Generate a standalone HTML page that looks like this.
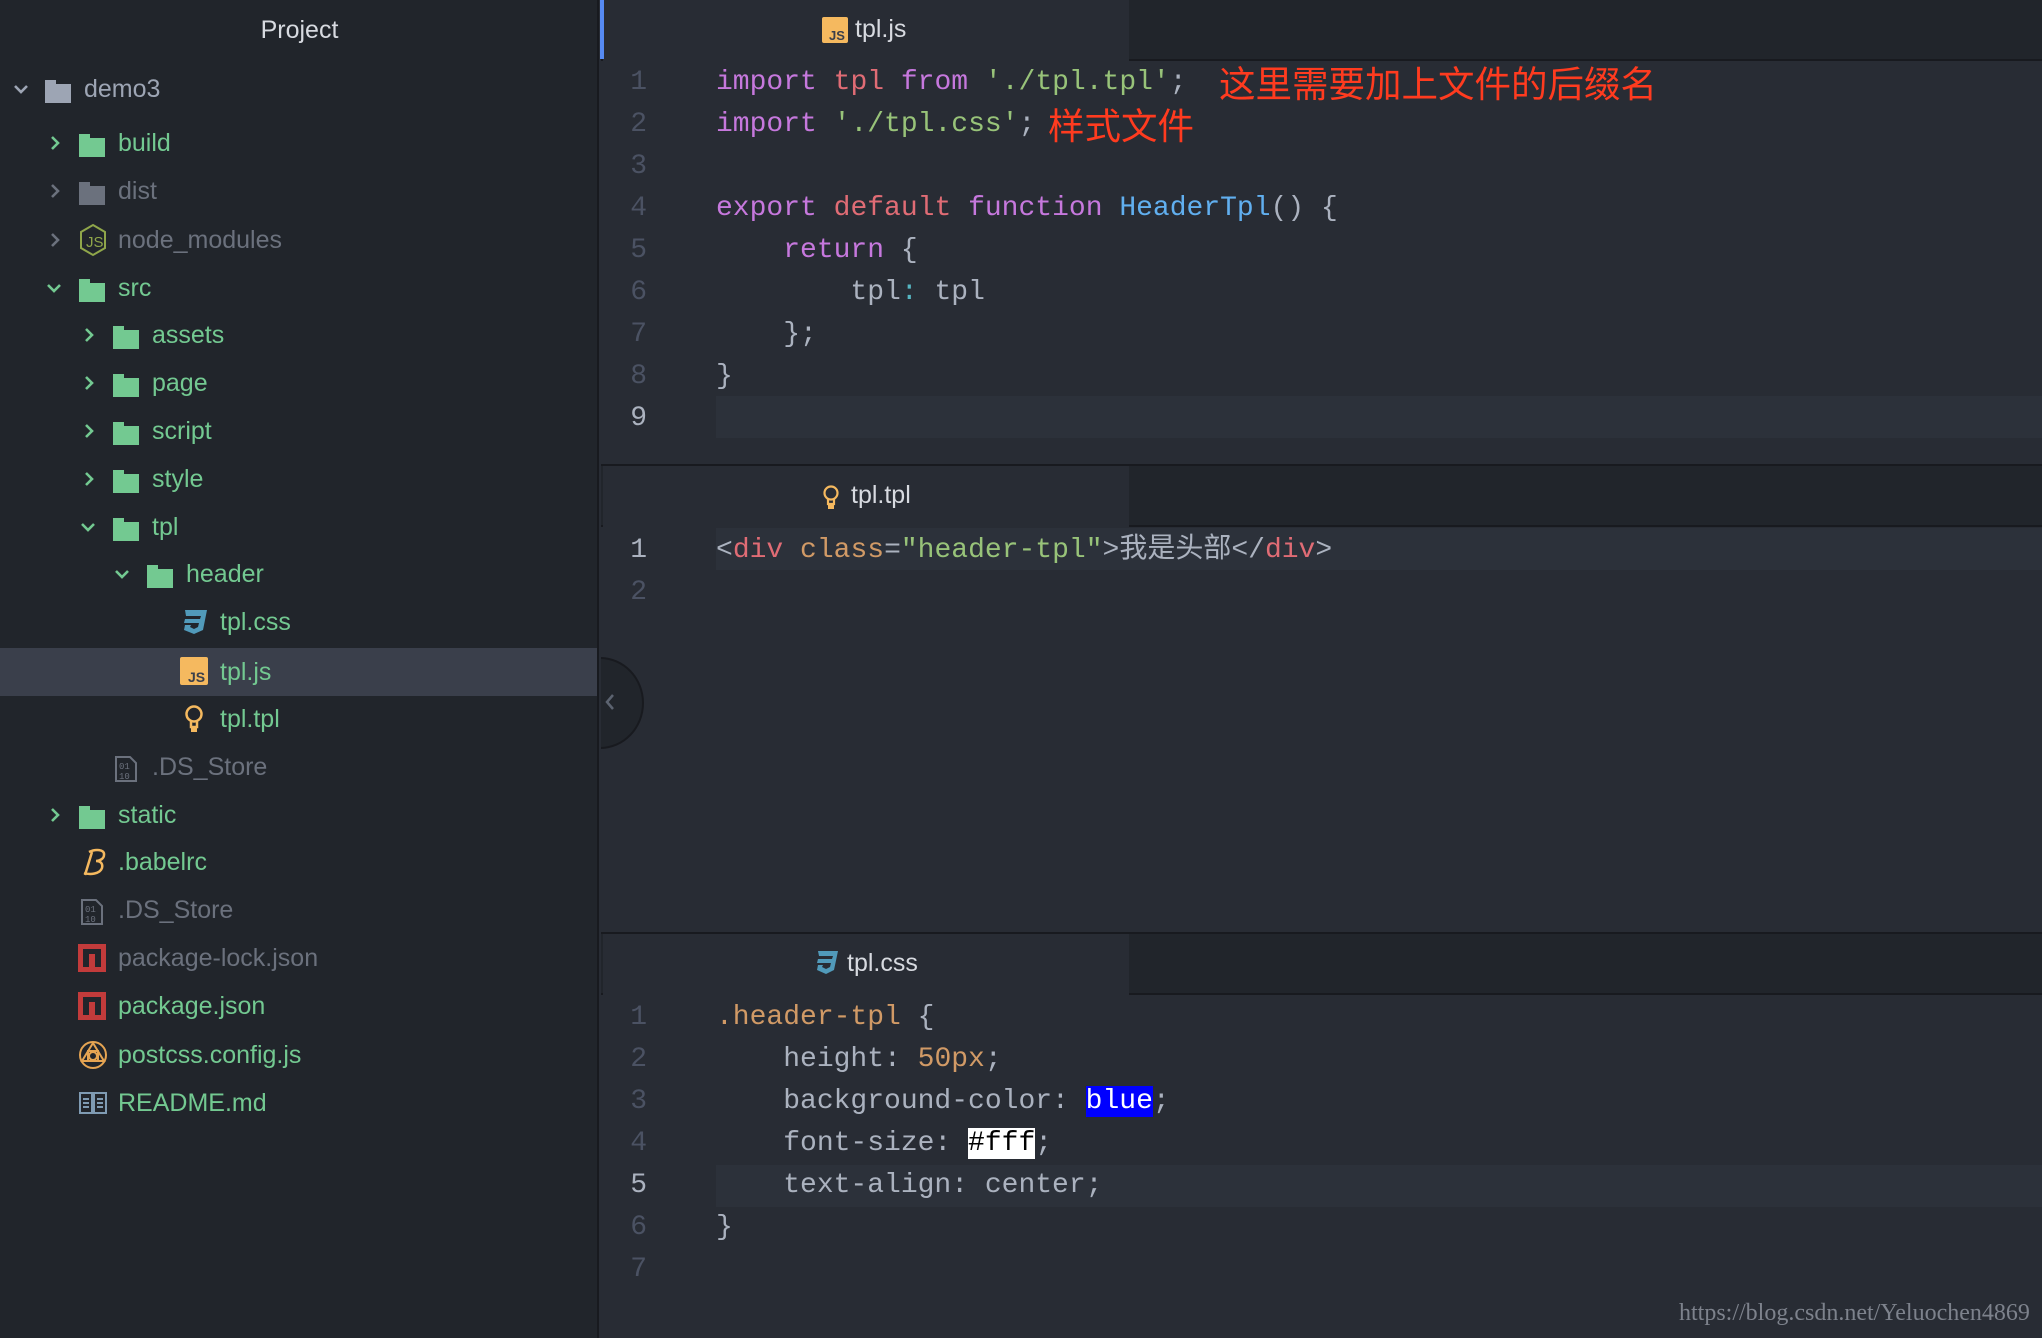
<!DOCTYPE html>
<html><head><meta charset="utf-8"><style>
*{margin:0;padding:0;box-sizing:border-box}
body{width:2042px;height:1338px;background:#282c34;position:relative;overflow:hidden;font-family:"Liberation Sans","Noto Sans CJK SC",sans-serif}
#side{position:absolute;left:0;top:0;width:599px;height:1338px;background:#21252b;border-right:2px solid #181a1f}
.title{position:absolute;top:16px;left:0;width:599px;text-align:center;color:#d7dae0;font-size:25px}
.row{position:absolute;left:0;width:597px;height:48px;font-size:25px;line-height:48px;white-space:nowrap}
.row .t{position:absolute;top:0}
.row svg{position:absolute}
.g{color:#73c991}.gr{color:#6b717d}.d{color:#9da5b4}
.sel{background:#3a3f4b}
.chev{position:absolute;top:17px}
.code{position:absolute;font-family:"Liberation Mono","Noto Sans CJK SC",monospace;font-size:28px;line-height:42px;height:42px;white-space:pre;color:#abb2bf}
.ln{position:absolute;width:60px;left:587px;text-align:right;font-family:"Liberation Mono",monospace;font-size:28px;line-height:42px;color:#4b5263}
.tabbar{position:absolute;left:601px;width:1441px;height:61px;background:#21252b;border-bottom:2px solid #181a1f}
.tab{position:absolute;left:2px;top:0;width:526px;height:61px;background:#282c34;color:#d7dae0;font-size:25px;line-height:58px}
.hl{position:absolute;left:716px;right:0;height:42px;background:#2c313a}
.k{color:#c678dd}.r{color:#e06c75}.s{color:#98c379}.f{color:#61afef}.o{color:#d19a66}.c{color:#56b6c2}
.cn{position:absolute;color:#ff3b1f;font-family:"Noto Sans CJK SC",sans-serif;font-size:36.5px;line-height:42px;height:42px}
</style></head><body>
<div id="side">
<div class="title">Project</div>

<div class="row" style="top:65px">
<svg class="chev" style="left:13px;top:19px" width="16" height="12" viewBox="0 0 16 12"><path d="M2 2l6 6 6-6" stroke="#9da5b4" stroke-width="2.6" fill="none"/></svg>
<svg style="left:44px;top:14px" width="28" height="25"><path d="M1 1h11v4h15v19H1z" fill="#9da5b4"/></svg>
<span class="t d" style="left:84px">demo3</span></div>

<div class="row" style="top:119px">
<svg class="chev" style="left:50px;top:16px" width="12" height="16"><path d="M2 2l6 6-6 6" stroke="#73c991" stroke-width="2.6" fill="none"/></svg>
<svg style="left:78px;top:14px" width="28" height="25"><path d="M1 1h11v4h15v19H1z" fill="#73c991"/></svg>
<span class="t g" style="left:118px">build</span></div>

<div class="row" style="top:167px">
<svg class="chev" style="left:50px;top:16px" width="12" height="16"><path d="M2 2l6 6-6 6" stroke="#6b717d" stroke-width="2.6" fill="none"/></svg>
<svg style="left:78px;top:14px" width="28" height="25"><path d="M1 1h11v4h15v19H1z" fill="#6b717d"/></svg>
<span class="t gr" style="left:118px">dist</span></div>

<div class="row" style="top:216px">
<svg class="chev" style="left:50px;top:16px" width="12" height="16"><path d="M2 2l6 6-6 6" stroke="#6b717d" stroke-width="2.6" fill="none"/></svg>
<svg style="left:78px;top:7px" width="30" height="34"><path d="M15 2l12 7v16l-12 7-12-7V9z" stroke="#8fa64a" stroke-width="2" fill="none"/><text x="8" y="24" font-size="15" fill="#8fa64a" font-family="Liberation Sans">JS</text></svg>
<span class="t gr" style="left:118px">node_modules</span></div>

<div class="row" style="top:264px">
<svg class="chev" style="left:46px;top:19px" width="16" height="12"><path d="M2 2l6 6 6-6" stroke="#73c991" stroke-width="2.6" fill="none"/></svg>
<svg style="left:78px;top:14px" width="28" height="25"><path d="M1 1h11v4h15v19H1z" fill="#73c991"/></svg>
<span class="t g" style="left:118px">src</span></div>

<div class="row" style="top:311px">
<svg class="chev" style="left:84px;top:16px" width="12" height="16"><path d="M2 2l6 6-6 6" stroke="#73c991" stroke-width="2.6" fill="none"/></svg>
<svg style="left:112px;top:14px" width="28" height="25"><path d="M1 1h11v4h15v19H1z" fill="#73c991"/></svg>
<span class="t g" style="left:152px">assets</span></div>

<div class="row" style="top:359px">
<svg class="chev" style="left:84px;top:16px" width="12" height="16"><path d="M2 2l6 6-6 6" stroke="#73c991" stroke-width="2.6" fill="none"/></svg>
<svg style="left:112px;top:14px" width="28" height="25"><path d="M1 1h11v4h15v19H1z" fill="#73c991"/></svg>
<span class="t g" style="left:152px">page</span></div>

<div class="row" style="top:407px">
<svg class="chev" style="left:84px;top:16px" width="12" height="16"><path d="M2 2l6 6-6 6" stroke="#73c991" stroke-width="2.6" fill="none"/></svg>
<svg style="left:112px;top:14px" width="28" height="25"><path d="M1 1h11v4h15v19H1z" fill="#73c991"/></svg>
<span class="t g" style="left:152px">script</span></div>

<div class="row" style="top:455px">
<svg class="chev" style="left:84px;top:16px" width="12" height="16"><path d="M2 2l6 6-6 6" stroke="#73c991" stroke-width="2.6" fill="none"/></svg>
<svg style="left:112px;top:14px" width="28" height="25"><path d="M1 1h11v4h15v19H1z" fill="#73c991"/></svg>
<span class="t g" style="left:152px">style</span></div>

<div class="row" style="top:503px">
<svg class="chev" style="left:80px;top:19px" width="16" height="12"><path d="M2 2l6 6 6-6" stroke="#73c991" stroke-width="2.6" fill="none"/></svg>
<svg style="left:112px;top:14px" width="28" height="25"><path d="M1 1h11v4h15v19H1z" fill="#73c991"/></svg>
<span class="t g" style="left:152px">tpl</span></div>

<div class="row" style="top:550px">
<svg class="chev" style="left:114px;top:19px" width="16" height="12"><path d="M2 2l6 6 6-6" stroke="#73c991" stroke-width="2.6" fill="none"/></svg>
<svg style="left:146px;top:14px" width="28" height="25"><path d="M1 1h11v4h15v19H1z" fill="#73c991"/></svg>
<span class="t g" style="left:186px">header</span></div>

<div class="row" style="top:598px">
<svg style="left:180px;top:11px" width="28" height="26"><path d="M5 1h22l-4 20-9 4-10-4 1-5h6l-1 2 4 2 4-2 1-4H4l1-4h15l1-3H6z" fill="#519aba"/></svg>
<span class="t g" style="left:220px">tpl.css</span></div>

<div class="row sel" style="top:648px">
<svg style="left:180px;top:9px" width="28" height="28"><rect width="28" height="28" rx="2" fill="#f5b95f"/><text x="8" y="25" font-size="14" font-weight="bold" fill="#3a3f4b" font-family="Liberation Sans">JS</text></svg>
<span class="t g" style="left:220px">tpl.js</span></div>

<div class="row" style="top:695px">
<svg style="left:184px;top:10px" width="20" height="30"><circle cx="10" cy="9" r="7.5" stroke="#f5b95f" stroke-width="2.5" fill="none"/><path d="M7 16v6h6v-6" stroke="#f5b95f" stroke-width="2.5" fill="none"/><rect x="7" y="22" width="6" height="5" fill="#f5b95f"/></svg>
<span class="t g" style="left:220px">tpl.tpl</span></div>

<div class="row" style="top:743px">
<svg style="left:114px;top:12px" width="24" height="28"><path d="M2 2h14l6 6v18H2z" stroke="#6b717d" stroke-width="2" fill="none"/><text x="5" y="14" font-size="9" fill="#6b717d" font-family="Liberation Mono">01</text><text x="5" y="24" font-size="9" fill="#6b717d" font-family="Liberation Mono">10</text></svg>
<span class="t gr" style="left:152px">.DS_Store</span></div>

<div class="row" style="top:791px">
<svg class="chev" style="left:50px;top:16px" width="12" height="16"><path d="M2 2l6 6-6 6" stroke="#73c991" stroke-width="2.6" fill="none"/></svg>
<svg style="left:78px;top:14px" width="28" height="25"><path d="M1 1h11v4h15v19H1z" fill="#73c991"/></svg>
<span class="t g" style="left:118px">static</span></div>

<div class="row" style="top:838px">
<svg style="left:80px;top:10px" width="28" height="30"><path d="M9 4c6-3 16-3 15 3 0 4-5 6-8 6 5 0 7 3 6 7-2 6-12 7-18 5M12 4L5 27" stroke="#f5b95f" stroke-width="2.5" fill="none"/></svg>
<span class="t g" style="left:118px">.babelrc</span></div>

<div class="row" style="top:886px">
<svg style="left:80px;top:12px" width="24" height="28"><path d="M2 2h14l6 6v18H2z" stroke="#6b717d" stroke-width="2" fill="none"/><text x="5" y="14" font-size="9" fill="#6b717d" font-family="Liberation Mono">01</text><text x="5" y="24" font-size="9" fill="#6b717d" font-family="Liberation Mono">10</text></svg>
<span class="t gr" style="left:118px">.DS_Store</span></div>

<div class="row" style="top:934px">
<svg style="left:78px;top:10px" width="28" height="28"><rect width="28" height="28" fill="#c23b3b"/><rect x="5" y="5" width="18" height="18" fill="#21252b"/><rect x="11" y="10" width="6" height="13" fill="#c23b3b"/></svg>
<span class="t gr" style="left:118px">package-lock.json</span></div>

<div class="row" style="top:982px">
<svg style="left:78px;top:10px" width="28" height="28"><rect width="28" height="28" fill="#c23b3b"/><rect x="5" y="5" width="18" height="18" fill="#21252b"/><rect x="11" y="10" width="6" height="13" fill="#c23b3b"/></svg>
<span class="t g" style="left:118px">package.json</span></div>

<div class="row" style="top:1031px">
<svg style="left:78px;top:9px" width="30" height="30"><circle cx="15" cy="15" r="13" stroke="#e5a452" stroke-width="2" fill="none"/><path d="M15 3L4 21h22z" stroke="#e5a452" stroke-width="2" fill="none"/><rect x="10" y="11" width="10" height="10" stroke="#e5a452" stroke-width="2" fill="none"/><circle cx="15" cy="16" r="4" stroke="#e5a452" stroke-width="2" fill="none"/></svg>
<span class="t g" style="left:118px">postcss.config.js</span></div>

<div class="row" style="top:1079px">
<svg style="left:78px;top:11px" width="30" height="26"><path d="M2 3h12v20H2zM16 3h12v20H16z" stroke="#7f9bb3" stroke-width="2" fill="none"/><path d="M5 9h6M5 13h6M5 17h6M19 9h6M19 13h6M19 17h6" stroke="#7f9bb3" stroke-width="2"/></svg>
<span class="t g" style="left:118px">README.md</span></div>
</div>

<div style="position:absolute;left:556px;top:657px;width:88px;height:92px;border-radius:50%;background:#21252b;border:2px solid #181a1f;clip-path:inset(0 0 0 45px)"></div>
<svg style="position:absolute;left:604px;top:692px" width="12" height="20"><path d="M9 3l-6 7 6 7" stroke="#5c6370" stroke-width="2.5" fill="none"/></svg>

<!-- Pane 1 -->
<div class="tabbar" style="top:0"><div class="tab">
<svg style="position:absolute;left:219px;top:17px" width="26" height="26"><rect width="26" height="26" rx="2" fill="#f5b95f"/><text x="7" y="23" font-size="13" font-weight="bold" fill="#3a3f4b" font-family="Liberation Sans">JS</text></svg>
<span style="position:absolute;left:252px">tpl.js</span></div></div>
<div style="position:absolute;left:600px;top:0;width:4px;height:59px;background:#568af2"></div>
<div class="hl" style="top:396px"></div>
<div class="ln" style="top:62px">1</div><div class="ln" style="top:104px">2</div><div class="ln" style="top:146px">3</div><div class="ln" style="top:188px">4</div><div class="ln" style="top:230px">5</div><div class="ln" style="top:272px">6</div><div class="ln" style="top:314px">7</div><div class="ln" style="top:356px">8</div><div class="ln" style="top:398px;color:#abb2bf">9</div>
<div class="code" style="left:716px;top:62px"><span class="k">import</span> <span class="r">tpl</span> <span class="k">from</span> <span class="s">'./tpl.tpl'</span>;</div>
<div class="cn" style="left:1219px;top:61px">这里需要加上文件的后缀名</div>
<div class="code" style="left:716px;top:104px"><span class="k">import</span> <span class="s">'./tpl.css'</span>;</div>
<div class="cn" style="left:1048px;top:103px">样式文件</div>
<div class="code" style="left:716px;top:188px"><span class="k">export</span> <span class="r">default</span> <span class="k">function</span> <span class="f">HeaderTpl</span>() {</div>
<div class="code" style="left:716px;top:230px">    <span class="k">return</span> {</div>
<div class="code" style="left:716px;top:272px">        tpl<span class="c">:</span> tpl</div>
<div class="code" style="left:716px;top:314px">    };</div>
<div class="code" style="left:716px;top:356px">}</div>
<div style="position:absolute;left:601px;right:0;top:464px;height:2px;background:#181a1f"></div>

<!-- Pane 2 -->
<div class="tabbar" style="top:466px"><div class="tab">
<svg style="position:absolute;left:219px;top:19px" width="18" height="26"><circle cx="9" cy="8" r="6.5" stroke="#f5b95f" stroke-width="2.2" fill="none"/><path d="M6 14v5h6v-5" stroke="#f5b95f" stroke-width="2.2" fill="none"/><rect x="6" y="19" width="6" height="5" fill="#f5b95f"/></svg>
<span style="position:absolute;left:248px">tpl.tpl</span></div></div>
<div class="hl" style="top:528px"></div>
<div class="ln" style="top:530px;color:#abb2bf">1</div><div class="ln" style="top:572px">2</div>
<div class="code" style="left:716px;top:530px">&lt;<span class="r">div</span> <span class="o">class</span>=<span class="s">"header-tpl"</span>&gt;我是头部&lt;/<span class="r">div</span>&gt;</div>
<div style="position:absolute;left:601px;right:0;top:932px;height:2px;background:#181a1f"></div>

<!-- Pane 3 -->
<div class="tabbar" style="top:934px"><div class="tab">
<svg style="position:absolute;left:210px;top:16px" width="26" height="26"><path d="M5 1h20l-4 19-8 4-9-4 1-5h5l-1 2 4 2 4-2 1-4H4l1-4h14l1-3H6z" fill="#519aba"/></svg>
<span style="position:absolute;left:244px">tpl.css</span></div></div>
<div class="hl" style="top:1165px"></div>
<div class="ln" style="top:997px">1</div><div class="ln" style="top:1039px">2</div><div class="ln" style="top:1081px">3</div><div class="ln" style="top:1123px">4</div><div class="ln" style="top:1165px;color:#abb2bf">5</div><div class="ln" style="top:1207px">6</div><div class="ln" style="top:1249px">7</div>
<div class="code" style="left:716px;top:997px"><span class="o">.header-tpl</span> {</div>
<div class="code" style="left:716px;top:1039px">    height: <span class="o">50px</span>;</div>
<div class="code" style="left:716px;top:1081px">    background-color: <span style="background:#0000ff;color:#fff">blue</span>;</div>
<div class="code" style="left:716px;top:1123px">    font-size: <span style="background:#fff;color:#000">#fff</span>;</div>
<div class="code" style="left:716px;top:1165px">    text-align: center;</div>
<div class="code" style="left:716px;top:1207px">}</div>

<div style="position:absolute;left:1679px;top:1300px;font-family:'Liberation Serif',serif;font-size:24px;color:#7d828c;white-space:nowrap">https://blog.csdn.net/Yeluochen4869</div>
</body></html>
